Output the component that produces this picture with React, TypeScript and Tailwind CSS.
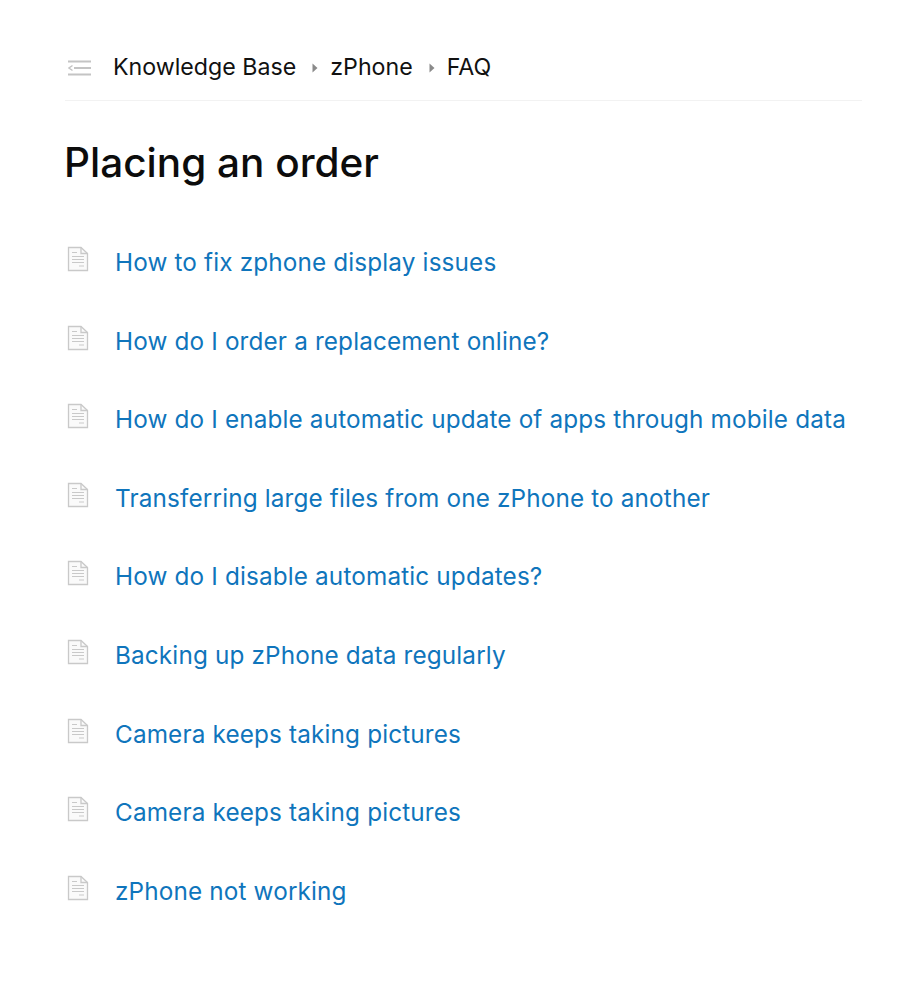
const articles = [
  'How to fix zphone display issues',
  'How do I order a replacement online?',
  'How do I enable automatic update of apps through mobile data',
  'Transferring large files from one zPhone to another',
  'How do I disable automatic updates?',
  'Backing up zPhone data regularly',
  'Camera keeps taking pictures',
  'Camera keeps taking pictures',
  'zPhone not working',
];

function DocIcon() {
  return (
    <svg width="24" height="26" viewBox="0 0 24 26" fill="none" stroke="#c9c9c9" strokeWidth="1.3" className="shrink-0">
      <path d="M3.5 1.5H16L22.5 7.5V24.5H3.5Z" fill="#fafafa" />
      <path d="M16 1.5V7.5H22.5" />
      <path d="M7 6.5H12M7 10.5H19M7 13.5H19M7 16.5H19M14 20H19" strokeWidth="1.1" />
    </svg>
  );
}

function Caret() {
  return (
    <svg width="6" height="10" viewBox="0 0 6 10" className="block shrink-0">
      <path d="M0.5 0.5L5.5 5L0.5 9.5Z" fill="#8a8a8a" />
    </svg>
  );
}

export default function App() {
  return (
    <div className="min-h-[983px] bg-white pl-[65px] pr-[52px] font-['Inter',sans-serif]">
      {/* breadcrumb */}
      <div className="flex h-[101px] items-center border-b border-[#f2f2f2] pt-[35px] text-[23.2px] text-[#111]">
        <svg width="23" height="16" viewBox="0 0 23 16" fill="none" stroke="#c4c4c4" strokeWidth="1.8" className="ml-[3px] shrink-0">
          <path d="M0 1.5H23M6 8H23M0 14.5H23" />
          <path d="M4.5 5.5L1 8L4.5 10.5" strokeWidth="1.4" />
        </svg>
        <span className="ml-[22px]">Knowledge Base</span>
        <span className="ml-[16px] mr-[12px]"><Caret /></span>
        <span>zPhone</span>
        <span className="ml-[16px] mr-[12px]"><Caret /></span>
        <span>FAQ</span>
      </div>

      <h1 className="mt-[36px] -ml-px text-[40.5px] leading-[52px] font-medium text-[#0c0c0c]">Placing an order</h1>

      <ul className="mt-[57px] flex flex-col">
        {articles.map((title, i) => (
          <li key={i} className="flex h-[78.6px] items-start">
            <DocIcon />
            <a className="ml-[26px] text-[24.3px] leading-[32px] tracking-[0.15px] text-[#0f75bc]">{title}</a>
          </li>
        ))}
      </ul>
    </div>
  );
}
